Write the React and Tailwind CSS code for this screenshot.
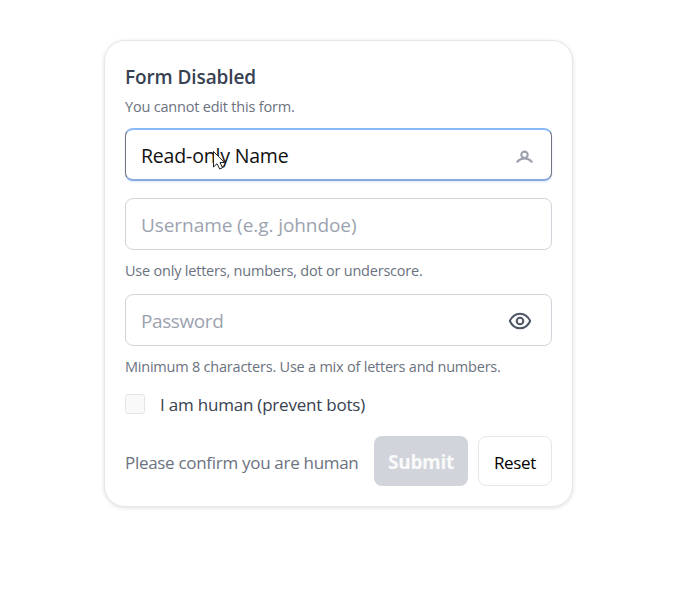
import React from "react";

const inputBase =
  "flex w-full items-center justify-between rounded-[8px] bg-white";

function UserIcon() {
  return (
    <svg className="mr-[18px] mt-[7px] h-[18px] w-[18px] text-[#9ca3af]" viewBox="0 0 18 18" fill="none" stroke="currentColor" strokeWidth="2.1" strokeLinecap="round">
      <circle cx="9.5" cy="5.8" r="3.2" />
      <path d="M2.3 12.7C6.3 8.3 12.7 8.3 16.700 12.700" />
    </svg>
  );
}

function EyeIcon() {
  return (
    <svg className="mr-[19px] mt-px h-6 w-6 text-[#4b5563]" viewBox="0 0 24 24" fill="none" stroke="currentColor" strokeWidth="2" strokeLinejoin="round">
      <path d="M1.800 12C4.200 7 7.500 4.700 12 4.700S19.800 7 22.200 12C19.800 17 16.500 19.300 12 19.300S4.200 17 1.800 12Z" />
      <circle cx="12" cy="12" r="3.300" />
    </svg>
  );
}

function Cursor() {
  return (
    <svg className="absolute left-[86px] top-[20px] h-[21px] w-[15px]" viewBox="0 0 15 21">
      <path d="M1.500 1.500V17L5 13.700L7.700 19L10.500 17.700L8 12.500H12.500Z" fill="white" stroke="#222" strokeWidth="1" />
    </svg>
  );
}

export default function App() {
  return (
    <main className="flex h-[592px] w-[686px] items-start bg-white pl-[104px] pt-10 font-['Open_Sans','Noto_Sans',sans-serif]">
      <form className="h-[467px] w-[469px] rounded-[21px] border border-[#e5e7eb] bg-white px-5 pt-[21px] shadow-[0_1px_4px_rgba(0,0,0,0.13)]">
        <h1 className="h-[31px] whitespace-nowrap text-[19px] font-semibold leading-[31px] tracking-[-0.1px] text-[#374151]">Form Disabled</h1>
        <p className="mt-[3px] h-[22px] whitespace-nowrap text-[14.500px] leading-[22px] tracking-[-0.200px] text-[#6b7280]">You cannot edit this form.</p>
        <div className={`${inputBase} relative mt-[10px] h-[53px] border-x border-y-2 border-x-[#6f7480] border-t-[#8cb9fa] border-b-[#8aaade] pl-[15px] shadow-[0_1px_2px_rgba(59,130,246,0.200)]`}>
          <span className="mt-[3px] whitespace-nowrap text-[19.500px] leading-[26px] tracking-[-0.180px] text-[#111]">Read-only Name</span>
          <UserIcon />
          <Cursor />
        </div>
        <div className={`${inputBase} mt-[17px] h-[52px] border border-[#d1d5db] pl-[15px]`}>
          <span className="mt-[2px] whitespace-nowrap text-[19px] leading-[26px] tracking-[-0.070px] text-[#9ca3af]">Username (e.g. johndoe)</span>
        </div>
        <p className="mt-[10px] h-[22px] whitespace-nowrap text-[14.500px] leading-[22px] tracking-[-0.210px] text-[#6b7280]">Use only letters, numbers, dot or underscore.</p>
        <div className={`${inputBase} mt-3 h-[52px] border border-[#d1d5db] pl-[15px]`}>
          <span className="mt-[2px] whitespace-nowrap text-[19px] leading-[26px] tracking-[-0.400px] text-[#9ca3af]">Password</span>
          <EyeIcon />
        </div>
        <p className="mt-[10px] h-[22px] whitespace-nowrap text-[14.500px] leading-[22px] tracking-[-0.220px] text-[#6b7280]">Minimum 8 characters. Use a mix of letters and numbers.</p>
        <label className="mt-[14px] flex h-[24px] items-center">
          <span className="h-5 w-5 rounded-[3px] border border-[#e3e4e6] bg-[#f9f9f9]" />
          <span className="ml-[15px] mt-[2px] whitespace-nowrap text-[17px] tracking-[-0.210px] text-[#374151]">I am human (prevent bots)</span>
        </label>
        <div className="mt-5 flex h-[50px] items-center">
          <span className="mt-[3px] w-[249px] whitespace-nowrap text-[17px] tracking-[-0.300px] text-[#6b7280]">Please confirm you are human</span>
          <button type="button" disabled className="h-[50px] w-[94px] rounded-[8px] bg-[#d1d5db] pt-[2px] text-[19px] font-bold tracking-[-0.300px] text-[#fafafa]">Submit</button>
          <button type="button" className="ml-[10px] h-[50px] w-[74px] rounded-[8px] border border-[#e5e7eb] pt-[3px] text-[17px] tracking-[-0.300px] text-black">Reset</button>
        </div>
      </form>
    </main>
  );
}
